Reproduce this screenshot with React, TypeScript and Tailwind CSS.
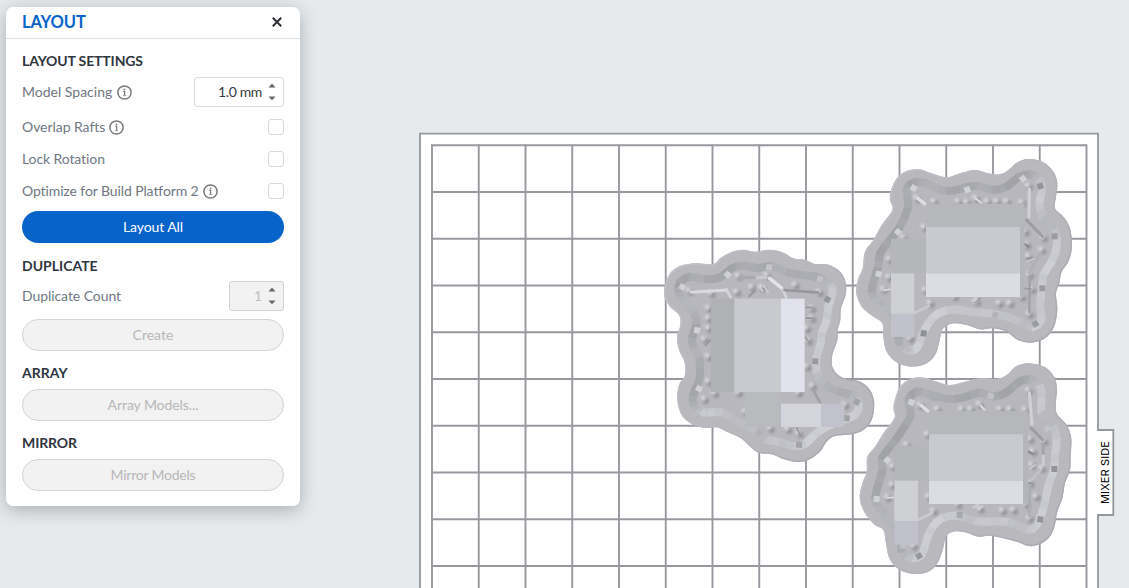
import React from "react";

type Pt = [number, number];
type Box = { x: number; y: number; w: number; h: number; fill: string };
type Model = {
  id: string;
  x: number;
  y: number;
  outer: Pt[];
  groove: Pt[];
  boxes: Box[];
  bumps: Pt[];
  struts: { a: Pt; b: Pt; c: string; w: number }[];
  tiles: { p: Pt; r: number; c: string }[];
};

function pairs(s: string): Pt[] {
  return s.split(" ").map((p) => p.split(",").map(Number) as Pt);
}

/** Samples a closed Catmull-Rom spline through the given points. */
function sample(points: Pt[], steps: number): Pt[] {
  const n = points.length;
  const out: Pt[] = [];
  for (let i = 0; i < n; i++) {
    const a = points[(i - 1 + n) % n];
    const b = points[i];
    const c = points[(i + 1) % n];
    const d = points[(i + 2) % n];
    for (let k = 0; k < steps; k++) {
      const t = k / steps;
      const f = (j: 0 | 1) =>
        0.5 *
        (2 * b[j] +
          (c[j] - a[j]) * t +
          (2 * a[j] - 5 * b[j] + 4 * c[j] - d[j]) * t * t +
          (3 * b[j] - a[j] - 3 * c[j] + d[j]) * t * t * t);
      out.push([f(0), f(1)]);
    }
  }
  return out;
}

function toPath(points: Pt[]): string {
  return "M" + points.map((p) => p[0].toFixed(1) + " " + p[1].toFixed(1)).join("L") + "Z";
}

function mix(t: number): string {
  const dark = [158, 159, 163];
  const mid = [183, 184, 189];
  const light = [211, 212, 218];
  const to = t < 0 ? dark : light;
  const k = Math.min(1, Math.abs(t));
  return "rgb(" + mid.map((v, i) => Math.round(v + (to[i] - v) * k)).join(",") + ")";
}

const L = "#d0d1d5";
const D = "#97989d";

const MODELS: Model[] = [
  {
    id: "a",
    x: 655,
    y: 240,
    outer: pairs(
      "30,135 45,100 75,78 120,70 175,72 195,55 225,38 262,29 300,35 345,29 385,38 415,55 450,60 480,72 515,73 550,90 570,120 573,160 558,205 556,240 548,270 547,300 532,345 532,380 550,405 575,417 615,425 645,450 658,490 650,540 625,570 590,583 540,588 515,605 495,635 460,660 425,666 385,657 350,643 310,638 280,615 258,595 215,575 185,562 150,564 110,552 80,525 67,480 72,435 90,405 88,365 72,330 66,290 76,255 72,225 45,200 28,170"
    ),
    groove: pairs(
      "75,128 105,110 150,118 195,112 230,85 265,77 310,85 350,78 395,97 440,105 490,112 527,133 532,160 520,200 515,240 500,280 497,310 485,350 485,400 510,435 550,455 590,465 612,490 600,525 550,545 505,565 475,588 450,612 415,618 370,605 330,598 300,570 250,545 200,517 155,518 125,505 112,480 120,450 135,410 132,350 115,320 112,290 125,250 115,215 85,180 70,155"
    ),
    boxes: [
      { x: 270, y: 455, w: 110, h: 105, fill: "#b9babd" },
      { x: 168, y: 176, w: 72, h: 280, fill: "#b0b1b4" },
      { x: 238, y: 176, w: 141, h: 280, fill: "#c9cacf" },
      { x: 378, y: 176, w: 71, h: 280, fill: "#e2e2ec" },
      { x: 378, y: 491, w: 121, h: 70, fill: "#d4d5dc" },
      { x: 499, y: 491, w: 69, h: 70, fill: "#c2c2cd" },
    ],
    bumps: pairs(
      "103,153 250,108 335,106 420,135 492,157 290,142 245,156 320,142 168,160 160,205 160,235 160,265 148,298 160,350 160,425 178,460 148,478 250,458 430,458 470,205 470,235 455,265 460,302 455,380 472,438 570,495 270,515 352,485 345,565 398,568 432,580"
    ),
    struts: [
      { a: [105, 157], b: [218, 150], c: "#d9d9dd", w: 9 },
      { a: [213, 145], b: [228, 175], c: "#d4d5d9", w: 8 },
      { a: [340, 112], b: [382, 146], c: "#e3e3e7", w: 10 },
      { a: [382, 146], b: [395, 175], c: "#d4d5d9", w: 8 },
      { a: [385, 150], b: [492, 158], c: D, w: 8 },
      { a: [250, 113], b: [335, 112], c: "#a8a9ae", w: 9 },
      { a: [302, 113], b: [337, 112], c: "#c9cacf", w: 10 },
      { a: [310, 140], b: [325, 154], c: L, w: 5 },
      { a: [326, 135], b: [340, 160], c: L, w: 5 },
      { a: [281, 170], b: [300, 152], c: D, w: 6 },
      { a: [472, 445], b: [497, 491], c: "#a0a1a6", w: 8 },
      { a: [150, 318], b: [168, 298], c: D, w: 5 },
      { a: [450, 290], b: [464, 309], c: D, w: 5 },
      { a: [452, 202], b: [475, 203], c: D, w: 6 },
      { a: [452, 234], b: [475, 235], c: D, w: 6 },
      { a: [425, 562], b: [435, 585], c: D, w: 5 },
    ],
    tiles: [
      { p: [82, 141], r: 30, c: L },
      { p: [218, 104], r: 40, c: L },
      { p: [342, 82], r: 4, c: "#c5c6cb" },
      { p: [495, 117], r: 15, c: "#c1c2c7" },
      { p: [517, 178], r: 30, c: "#96979c" },
      { p: [126, 271], r: 12, c: L },
      { p: [481, 364], r: 4, c: "#989a9f" },
      { p: [132, 446], r: 25, c: L },
      { p: [145, 520], r: 35, c: "#c9cacf" },
      { p: [605, 486], r: 25, c: "#a2a3a8" },
      { p: [575, 535], r: 5, c: "#a0a1a6" },
      { p: [432, 614], r: 5, c: "#a2a3a8" },
      { p: [313, 578], r: 35, c: "#b1b1b6" },
    ],
  },
  {
    id: "b",
    x: 850,
    y: 150,
    outer: pairs(
      "122,125 140,85 170,63 208,58 245,70 290,82 330,70 375,60 415,70 450,73 475,60 505,35 540,27 580,37 610,65 622,100 618,140 615,175 640,200 660,235 666,290 655,335 635,365 628,400 618,430 622,480 612,530 585,565 540,578 500,568 470,545 430,535 390,538 350,525 310,520 280,535 270,565 258,610 230,640 185,650 140,637 110,605 100,560 97,520 70,500 35,470 18,425 25,385 38,355 45,305 70,270 95,225 127,180 120,150"
    ),
    groove: pairs(
      "170,118 190,98 230,100 270,120 310,122 350,112 385,108 430,120 470,110 505,82 540,73 568,88 576,120 568,160 580,205 615,240 620,290 605,335 580,375 575,420 570,470 575,510 545,533 510,515 470,500 420,490 360,485 310,478 265,490 235,520 215,560 200,595 175,602 148,585 145,540 130,500 85,455 65,425 75,380 85,350 90,310 120,270 150,230 175,170"
    ),
    boxes: [
      { x: 510, y: 161, w: 14, h: 280, fill: "#b5b6bb" },
      { x: 123, y: 266, w: 106, h: 104, fill: "#b5b6b9" },
      { x: 123, y: 370, w: 70, h: 122, fill: "#ced0d4" },
      { x: 123, y: 491, w: 70, h: 70, fill: "#c1c1cc" },
      { x: 228, y: 161, w: 294, h: 71, fill: "#b6b7ba" },
      { x: 228, y: 231, w: 282, h: 141, fill: "#c9cacf" },
      { x: 228, y: 371, w: 282, h: 70, fill: "#dcdde3" },
    ],
    bumps: pairs(
      "200,145 252,155 325,155 350,157 377,145 412,155 440,155 470,155 515,158 535,108 222,232 160,263 118,328 116,382 100,418 225,420 200,347 313,440 240,460 380,455 447,460 480,460 515,440 525,245 530,285 535,320 538,375 545,418 575,300 580,263 538,492 180,565"
    ),
    struts: [
      { a: [201, 143], b: [227, 164], c: "#dedee2", w: 10 },
      { a: [538, 113], b: [537, 205], c: L, w: 9 },
      { a: [527, 207], b: [580, 262], c: "#9c9da2", w: 9 },
      { a: [575, 305], b: [535, 372], c: "#b0b1b7", w: 9 },
      { a: [539, 375], b: [538, 490], c: "#a2a3a8", w: 8 },
      { a: [193, 489], b: [240, 466], c: "#c9cacf", w: 8 },
      { a: [100, 422], b: [122, 417], c: "#dedee2", w: 5 },
      { a: [375, 144], b: [395, 160], c: "#dedee2", w: 6 },
      { a: [365, 452], b: [382, 440], c: L, w: 5 },
      { a: [375, 458], b: [393, 443], c: D, w: 4 },
      { a: [512, 275], b: [537, 290], c: "#898a90", w: 7 },
      { a: [527, 325], b: [550, 325], c: D, w: 5 },
      { a: [530, 335], b: [553, 326], c: L, w: 4 },
      { a: [514, 275], b: [514, 315], c: D, w: 5 },
      { a: [523, 415], b: [545, 417], c: D, w: 5 },
    ],
    tiles: [
      { p: [191, 114], r: 30, c: L },
      { p: [352, 119], r: -20, c: L },
      { p: [519, 86], r: -35, c: L },
      { p: [571, 108], r: -15, c: "#94959b" },
      { p: [144, 246], r: 40, c: L },
      { p: [86, 372], r: 12, c: L },
      { p: [98, 460], r: 30, c: "#b2b3b7" },
      { p: [614, 259], r: 0, c: "#9b9ca1" },
      { p: [577, 415], r: 0, c: "#9b9ca1" },
      { p: [556, 522], r: -30, c: "#9b9ca1" },
      { p: [436, 495], r: 15, c: "#b2b3b9" },
      { p: [221, 550], r: 8, c: "#909197" },
      { p: [175, 597], r: -30, c: "#bcbdc3" },
    ],
  },
  {
    id: "c",
    x: 850,
    y: 355,
    outer: pairs(
      "133,140 150,95 180,73 215,67 255,78 300,90 345,80 390,70 440,72 470,60 500,33 540,25 585,37 612,65 621,100 618,140 620,175 650,210 664,250 662,300 660,345 645,385 637,430 622,470 612,520 590,555 545,574 500,560 460,550 420,542 385,545 345,532 310,530 288,545 278,585 262,625 235,650 190,657 145,642 118,610 108,565 100,525 75,510 45,475 29,430 37,385 50,350 52,305 75,275 100,235 133,190 131,165"
    ),
    groove: pairs(
      "175,135 200,110 240,118 290,132 340,128 390,112 430,125 470,112 505,82 540,72 570,92 575,130 575,175 610,215 620,255 615,300 612,345 595,390 585,440 570,490 545,525 510,515 470,500 420,500 370,498 320,482 275,490 245,520 228,560 215,600 185,610 155,590 150,540 125,505 90,465 75,430 88,380 98,340 95,310 125,270 150,235 183,180"
    ),
    boxes: [
      { x: 518, y: 168, w: 16, h: 278, fill: "#b5b6bb" },
      { x: 133, y: 273, w: 106, h: 104, fill: "#b5b6b9" },
      { x: 133, y: 377, w: 71, h: 122, fill: "#ced0d4" },
      { x: 133, y: 498, w: 71, h: 71, fill: "#c1c1cc" },
      { x: 237, y: 168, w: 295, h: 71, fill: "#b6b7ba" },
      { x: 237, y: 238, w: 282, h: 140, fill: "#c9cacf" },
      { x: 237, y: 378, w: 282, h: 69, fill: "#dcdde3" },
    ],
    bumps: pairs(
      "210,150 262,163 335,163 362,163 388,148 450,163 480,163 525,165 535,107 232,238 170,270 128,335 126,390 112,427 235,425 210,355 323,448 250,468 390,462 457,467 490,465 528,447 540,252 548,290 545,330 540,385 558,425 575,340 582,258 538,490 190,573"
    ),
    struts: [
      { a: [211, 149], b: [237, 171], c: "#dedee2", w: 10 },
      { a: [538, 110], b: [546, 212], c: L, w: 9 },
      { a: [540, 216], b: [581, 257], c: "#9c9da2", w: 9 },
      { a: [580, 263], b: [580, 298], c: "#a5a6ab", w: 9 },
      { a: [580, 300], b: [580, 333], c: "#cbccd1", w: 9 },
      { a: [575, 342], b: [545, 375], c: "#c2c3c8", w: 7 },
      { a: [540, 385], b: [538, 487], c: "#adaeb3", w: 8 },
      { a: [204, 495], b: [250, 472], c: "#c9cacf", w: 8 },
      { a: [111, 429], b: [132, 427], c: "#dedee2", w: 5 },
      { a: [390, 150], b: [405, 166], c: "#dedee2", w: 6 },
      { a: [368, 459], b: [386, 447], c: L, w: 5 },
      { a: [385, 463], b: [400, 452], c: L, w: 5 },
      { a: [523, 284], b: [550, 297], c: "#898a90", w: 7 },
      { a: [524, 285], b: [524, 325], c: D, w: 5 },
      { a: [538, 343], b: [558, 329], c: L, w: 5 },
      { a: [534, 383], b: [548, 385], c: D, w: 5 },
    ],
    tiles: [
      { p: [184, 142], r: 20, c: L },
      { p: [250, 129], r: 30, c: "#adaeb2" },
      { p: [422, 123], r: 15, c: "#c1c2c7" },
      { p: [592, 220], r: -30, c: "#c2c3c9" },
      { p: [112, 316], r: 40, c: L },
      { p: [80, 432], r: 3, c: L },
      { p: [105, 470], r: 30, c: "#b2b3b7" },
      { p: [613, 342], r: 0, c: "#94959b" },
      { p: [571, 493], r: 8, c: "#94959b" },
      { p: [329, 480], r: 5, c: "#a8a9af" },
      { p: [207, 603], r: -30, c: "#96979d" },
      { p: [159, 572], r: 0, c: "#bfc0c5" },
    ],
  },
];

function Raft({ model }: { model: Model }) {
  const outline = toPath(sample(model.outer, 5));
  const groove = sample(model.groove, 2);
  const clip = "raft-" + model.id;
  return (
    <g transform={"translate(" + model.x + " " + model.y + ") scale(0.33333)"}>
      <clipPath id={clip}>
        <path d={outline} />
      </clipPath>
      <path d={outline} fill="#b8b8bd" />
      <g clipPath={"url(#" + clip + ")"}>
        <path d={outline} fill="none" stroke="url(#rim)" strokeWidth="9" />
      </g>
      <path d={toPath(groove)} fill="#b8b7bd" />
      {groove.map((p, i) => {
        const q = groove[(i + 1) % groove.length];
        const dx = q[0] - p[0];
        const dy = q[1] - p[1];
        const len = Math.hypot(dx, dy) || 1;
        const facing = (dy * 0.72 - dx * 0.7) / len;
        return (
          <line
            key={i}
            x1={p[0] - (dx / len) * 3}
            y1={p[1] - (dy / len) * 3}
            x2={q[0] + (dx / len) * 3}
            y2={q[1] + (dy / len) * 3}
            stroke={mix(facing * (i % 3 === 0 ? 0.68 : 0.85))}
            strokeWidth="24"
          />
        );
      })}
      {model.tiles.map((t, i) => (
        <rect
          key={i}
          x="-9"
          y="-9"
          width="18"
          height="18"
          fill={t.c}
          transform={"translate(" + t.p[0] + " " + t.p[1] + ") rotate(" + t.r + ")"}
        />
      ))}
      {model.bumps.map((p, i) => (
        <g key={i}>
          <circle cx={p[0] + 5} cy={p[1] + 5} r="18" fill="url(#bumpShade)" />
          <circle cx={p[0] - 4} cy={p[1] - 4} r="14" fill="url(#bumpLight)" />
        </g>
      ))}
      {model.struts.map((s, i) => (
        <line key={i} x1={s.a[0]} y1={s.a[1]} x2={s.b[0]} y2={s.b[1]} stroke={s.c} strokeWidth={s.w} />
      ))}
      {model.boxes.map((b, i) => (
        <rect key={i} x={b.x} y={b.y} width={b.w} height={b.h} fill={b.fill} />
      ))}
    </g>
  );
}

function BuildPlate() {
  const columns = Array.from({ length: 15 }, (_, i) => 432 + i * 46.75);
  const rows = Array.from({ length: 10 }, (_, i) => 145.3 + i * 46.75);
  return (
    <svg className="absolute inset-0" width="1129" height="588" viewBox="0 0 1129 588">
      <defs>
        <linearGradient id="rim" x1="0" y1="0" x2="1" y2="0.6">
          <stop offset="0" stopColor="#c3c4ca" />
          <stop offset="0.5" stopColor="#b9babf" />
          <stop offset="1" stopColor="#aaabb1" />
        </linearGradient>
        <radialGradient id="bumpLight">
          <stop offset="0" stopColor="#d8d9dd" />
          <stop offset="0.4" stopColor="#c9cacf" stopOpacity="0.8" />
          <stop offset="1" stopColor="#bcbcc2" stopOpacity="0" />
        </radialGradient>
        <radialGradient id="bumpShade">
          <stop offset="0" stopColor="#8e8f95" />
          <stop offset="0.5" stopColor="#9c9da2" stopOpacity="0.6" />
          <stop offset="1" stopColor="#b4b4ba" stopOpacity="0" />
        </radialGradient>
      </defs>
      <path d="M420 600V133.6H1098V430H1113.3V515H1098V600Z" fill="#fff" stroke="#96979d" strokeWidth="1.8" />
      <g stroke="#98999f" strokeWidth="1.9">
        {columns.map((x) => (
          <line key={x} x1={x} x2={x} y1="144.6" y2="588" />
        ))}
        {rows.map((y) => (
          <line key={y} x1="431" x2="1087" y1={y} y2={y} />
        ))}
      </g>
      <text transform="translate(1109 504) rotate(-90)" className="font-['Inter'] text-[11px]" textLength="63" fill="#000">
        MIXER SIDE
      </text>
      {MODELS.map((m) => (
        <Raft key={m.id} model={m} />
      ))}
    </svg>
  );
}

function InfoIcon() {
  return (
    <svg width="15" height="15" viewBox="0 0 15 15" className="shrink-0">
      <circle cx="7.5" cy="7.5" r="6.6" fill="none" stroke="#7b7b7b" strokeWidth="1.5" />
      <rect x="6.7" y="3.7" width="1.6" height="1.5" fill="#7b7b7b" />
      <path d="M6.2 6.4H7.6V10.6" fill="none" stroke="#7b7b7b" strokeWidth="1.3" />
      <path d="M6 10.6H9.2" stroke="#9a9a9a" strokeWidth="0.9" />
    </svg>
  );
}

function Arrows() {
  return (
    <svg width="8" height="18" viewBox="0 0 8 18" className="mr-[7px] ml-[6px]">
      <path d="M0.5 4.6L4 0.6L7.5 4.6Z" fill="#686868" />
      <path d="M0.5 13.4L4 17.2L7.5 13.4Z" fill="#686868" />
    </svg>
  );
}

function Heading({ text, className }: { text: string; className: string }) {
  return <h3 className={"h-5 text-[14px] leading-5 font-bold whitespace-nowrap text-[#303640] " + className}>{text}</h3>;
}

function Field({ text, className, info }: { text: string; className: string; info?: boolean }) {
  return (
    <div className="flex items-center gap-[5px]">
      <span className={"whitespace-nowrap text-[#6f7883] " + className}>{text}</span>
      {info && <InfoIcon />}
    </div>
  );
}

function CheckRow({ text, className, info }: { text: string; className: string; info?: boolean }) {
  return (
    <div className="flex h-8 items-center justify-between">
      <Field text={text} className={className} info={info} />
      <span className="size-4 rounded-[3px] border border-[#dadada] bg-white" />
    </div>
  );
}

function DisabledButton({ text, className }: { text: string; className: string }) {
  return (
    <button
      disabled
      className={
        "flex h-8 w-full items-center justify-center rounded-full border border-[#d4d4d4] bg-[#f2f2f2] pb-px leading-5 text-[#b7b7b7] " +
        className
      }
    >
      {text}
    </button>
  );
}

export default function App() {
  return (
    <div className="relative h-[588px] w-[1129px] overflow-hidden bg-[#e6eaed] pt-[7px] pl-[6px] font-['Lato',sans-serif] text-[14px] leading-5">
      <BuildPlate />
      <section className="relative h-[499px] w-[294px] rounded-[7px] bg-white shadow-[0_4px_18px_rgba(0,0,0,0.26)]">
        <header className="flex h-8 items-center justify-between border-b border-[#d9e0e8] px-4">
          <h2 className="pb-px text-[16.5px] font-bold tracking-[-0.1px] text-[#0863ca]">LAYOUT</h2>
          <svg width="10" height="10" viewBox="0 0 10 10" className="-mt-px mr-[2px]">
            <path d="M0.8 0.8L9.2 9.2M9.2 0.8L0.8 9.2" stroke="#2d2f33" strokeWidth="2" />
          </svg>
        </header>
        <div className="px-4 pt-3">
          <Heading text="LAYOUT SETTINGS" className="mb-px tracking-[-0.13px]" />
          <div className="-mb-px flex h-10 items-center justify-between">
            <Field text="Model Spacing" className="w-[90px]" info />
            <div className="flex h-[30px] w-[90px] items-center justify-end rounded-[3px] border border-[#dadada] bg-white">
              <span className="tracking-[-0.35px] whitespace-nowrap text-[#363b43]">1.0 mm</span>
              <Arrows />
            </div>
          </div>
          <CheckRow text="Overlap Rafts" className="w-[82px] tracking-[-0.05px]" info />
          <CheckRow text="Lock Rotation" className="w-[82px] tracking-[-0.1px]" />
          <CheckRow text="Optimize for Build Platform 2" className="w-[176px] tracking-[-0.1px]" info />
          <button className="mt-1 flex h-8 w-full items-center justify-center rounded-full bg-[#0763c9] pb-px tracking-[-0.1px] text-white">
            Layout All
          </button>
          <Heading text="DUPLICATE" className="mt-[13px]" />
          <div className="flex h-10 items-center justify-between">
            <Field text="Duplicate Count" className="w-[99px] tracking-[-0.07px]" />
            <div className="flex h-[30px] w-[55px] items-center justify-end rounded-[3px] border border-[#d2d2d2] bg-[#f2f2f2]">
              <span className="text-[#c0c0c0]">1</span>
              <Arrows />
            </div>
          </div>
          <div className="mt-[3px]">
            <DisabledButton text="Create" className="" />
          </div>
          <Heading text="ARRAY" className="mt-3 mb-1.5" />
          <DisabledButton text="Array Models..." className="tracking-[-0.08px]" />
          <Heading text="MIRROR" className="mt-3 mb-1.5 tracking-[-0.1px]" />
          <DisabledButton text="Mirror Models" className="tracking-[-0.22px]" />
        </div>
      </section>
    </div>
  );
}
